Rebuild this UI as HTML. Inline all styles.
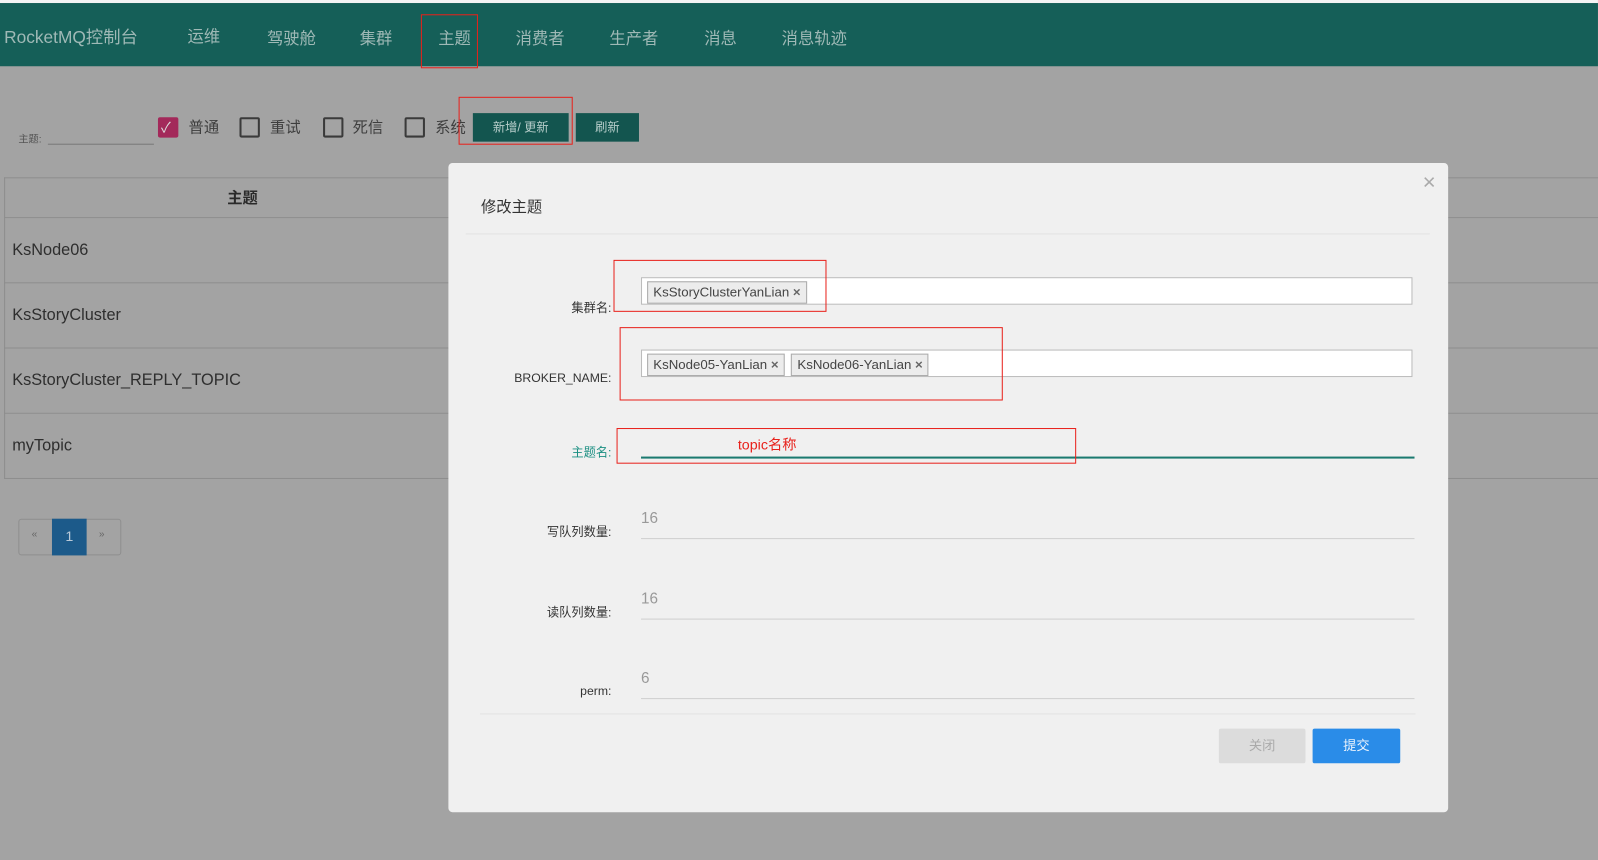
<!DOCTYPE html>
<html><head><meta charset="utf-8"><style>
html,body{margin:0;padding:0;width:1598px;height:860px;overflow:hidden;background:#a3a3a3;font-family:"Liberation Sans","Noto Sans CJK SC",sans-serif}
#w{position:absolute;left:0;top:0;width:1568px;height:844px;transform:scale(1.0191);transform-origin:0 0;background:#a3a3a3}
.a{position:absolute}
.nav{left:0;top:3px;width:1568px;height:62px;background:#155f58;border-top:0}
.nav span{position:absolute;top:21px;color:#9fb9b6;font-size:16px}
.red{position:absolute;border:1.5px solid #e8211b}
.cb{position:absolute;top:115px;width:16px;height:16px;border:2px solid #3a3a3a;border-radius:2px}
.cbl{position:absolute;top:114px;font-size:15px;color:#3e3e3e}
.btn{position:absolute;top:111px;height:28px;background:#13554f;color:#b9cfcc;font-size:12px;text-align:center;line-height:28px}
.row{position:absolute;left:4px;width:440px;height:63px;border-top:1px solid #8e8e8e;font-size:16px;color:#2e2e2e;line-height:63px;padding-left:8px;box-sizing:border-box}
.modal{left:440px;top:160px;width:981px;height:637px;background:#f0f0f0;border-radius:4px}
.lbl{position:absolute;font-size:12px;color:#333;text-align:right;right:821px}
.tag{display:inline-block;border:1px solid #aaa;background:#ececec;font-size:13px;color:#444;padding:2px 5px;margin:0 2px 0 0;height:16px;line-height:16px}
.ul{position:absolute;left:189px;width:759px;border-bottom:1px solid #cfcfcf;height:28px;font-size:15px;color:#999}
</style></head><body><div id="w">
<div class="a" style="left:0;top:0;width:1568px;height:3px;background:#f4f4f4"></div>
<div class="a nav">
<span style="left:4px;top:19px;font-size:17px">RocketMQ控制台</span>
<span style="left:184px;top:19px">运维</span><span style="left:262px">驾驶舱</span><span style="left:353px">集群</span><span style="left:430px">主题</span><span style="left:506px">消费者</span><span style="left:598px">生产者</span><span style="left:691px">消息</span><span style="left:767px">消息轨迹</span>
</div>
<div class="red" style="left:413px;top:14px;width:54px;height:51px"></div>
<div class="a" style="left:18px;top:128px;font-size:10px;color:#555">主题:</div>
<div class="a" style="left:47px;top:141px;width:104px;border-bottom:1px solid #777"></div>
<div class="cb" style="left:155px;background:#a3295a;border-color:#a3295a"></div>
<div class="a" style="left:158px;top:115px;color:#ddd;font-size:14px">✓</div>
<div class="cbl" style="left:185px">普通</div>
<div class="cb" style="left:235px"></div><div class="cbl" style="left:265px">重试</div>
<div class="cb" style="left:317px"></div><div class="cbl" style="left:346px">死信</div>
<div class="cb" style="left:397px"></div><div class="cbl" style="left:427px">系统</div>
<div class="btn" style="left:464px;width:94px">新增/ 更新</div>
<div class="btn" style="left:565px;width:62px">刷新</div>
<div class="red" style="left:450px;top:95px;width:110px;height:45px"></div>
<div class="a" style="left:4px;top:174px;width:1564px;height:294px;border-left:1px solid #8e8e8e;border-bottom:1px solid #8e8e8e;border-top:1px solid #8e8e8e"></div>
<div class="a" style="left:223px;top:183px;font-size:15px;font-weight:bold;color:#2a2a2a">主题</div>
<div class="row" style="top:213px">KsNode06</div>
<div class="row" style="top:277px">KsStoryCluster</div>
<div class="row" style="top:341px">KsStoryCluster_REPLY_TOPIC</div>
<div class="row" style="top:405px">myTopic</div>
<div class="a" style="left:1421px;top:213px;width:147px;border-top:1px solid #8e8e8e"></div>
<div class="a" style="left:1421px;top:277px;width:147px;border-top:1px solid #8e8e8e"></div>
<div class="a" style="left:1421px;top:341px;width:147px;border-top:1px solid #8e8e8e"></div>
<div class="a" style="left:1421px;top:405px;width:147px;border-top:1px solid #8e8e8e"></div>
<div class="a" style="left:18px;top:509px;width:99px;height:34px;border:1px solid #8e8e8e;border-radius:3px"></div>
<div class="a" style="left:31px;top:519px;font-size:10px;color:#666">«</div>
<div class="a" style="left:51px;top:509px;width:34px;height:36px;background:#1c5a8a;color:#b9c9d8;text-align:center;line-height:34px;font-size:14px">1</div>
<div class="a" style="left:97px;top:519px;font-size:10px;color:#666">»</div>

<div class="a modal">
<div class="a" style="left:32px;top:32px;font-size:15px;color:#333">修改主题</div>
<div class="a" style="left:956px;top:6px;font-size:22px;color:#aaa">×</div>
<div class="a" style="left:17px;top:69px;width:946px;border-top:1px solid #e2e2e2"></div>
<div class="lbl" style="top:133px">集群名:</div>
<div class="a" style="left:189px;top:112px;width:757px;height:27px;background:#fff;border:1px solid #bbb;padding:3px 0 0 5px;box-sizing:border-box"><span class="tag">KsStoryClusterYanLian <b style="color:#666">×</b></span></div>
<div class="lbl" style="top:204px">BROKER_NAME:</div>
<div class="a" style="left:189px;top:183px;width:757px;height:27px;background:#fff;border:1px solid #bbb;padding:3px 0 0 5px;box-sizing:border-box"><span class="tag">KsNode05-YanLian <b style="color:#666">×</b></span> <span class="tag">KsNode06-YanLian <b style="color:#666">×</b></span></div>
<div class="lbl" style="top:275px;color:#1b8f82">主题名:</div>
<div class="a" style="left:189px;top:288px;width:759px;border-bottom:2px solid #1b7a70"></div>
<div class="a" style="left:284px;top:266px;font-size:14px;color:#e8211b">topic名称</div>
<div class="lbl" style="top:353px">写队列数量:</div><div class="ul" style="top:340px">16</div>
<div class="lbl" style="top:432px">读队列数量:</div><div class="ul" style="top:419px">16</div>
<div class="lbl" style="top:511px">perm:</div><div class="ul" style="top:497px">6</div>
<div class="a" style="left:31px;top:540px;width:918px;border-top:1px solid #e2e2e2"></div>
<div class="a" style="left:756px;top:555px;width:85px;height:34px;background:#dcdcdc;color:#aaa;font-size:13px;text-align:center;line-height:34px;border-radius:2px">关闭</div>
<div class="a" style="left:848px;top:555px;width:86px;height:34px;background:#2a8ce8;color:#e9f2fc;font-size:13px;text-align:center;line-height:34px;border-radius:2px">提交</div>
</div>
<div class="red" style="left:602px;top:255px;width:207px;height:49px"></div>
<div class="red" style="left:608px;top:321px;width:374px;height:70px"></div>
<div class="red" style="left:605px;top:420px;width:449px;height:33px"></div>
</div></body></html>
